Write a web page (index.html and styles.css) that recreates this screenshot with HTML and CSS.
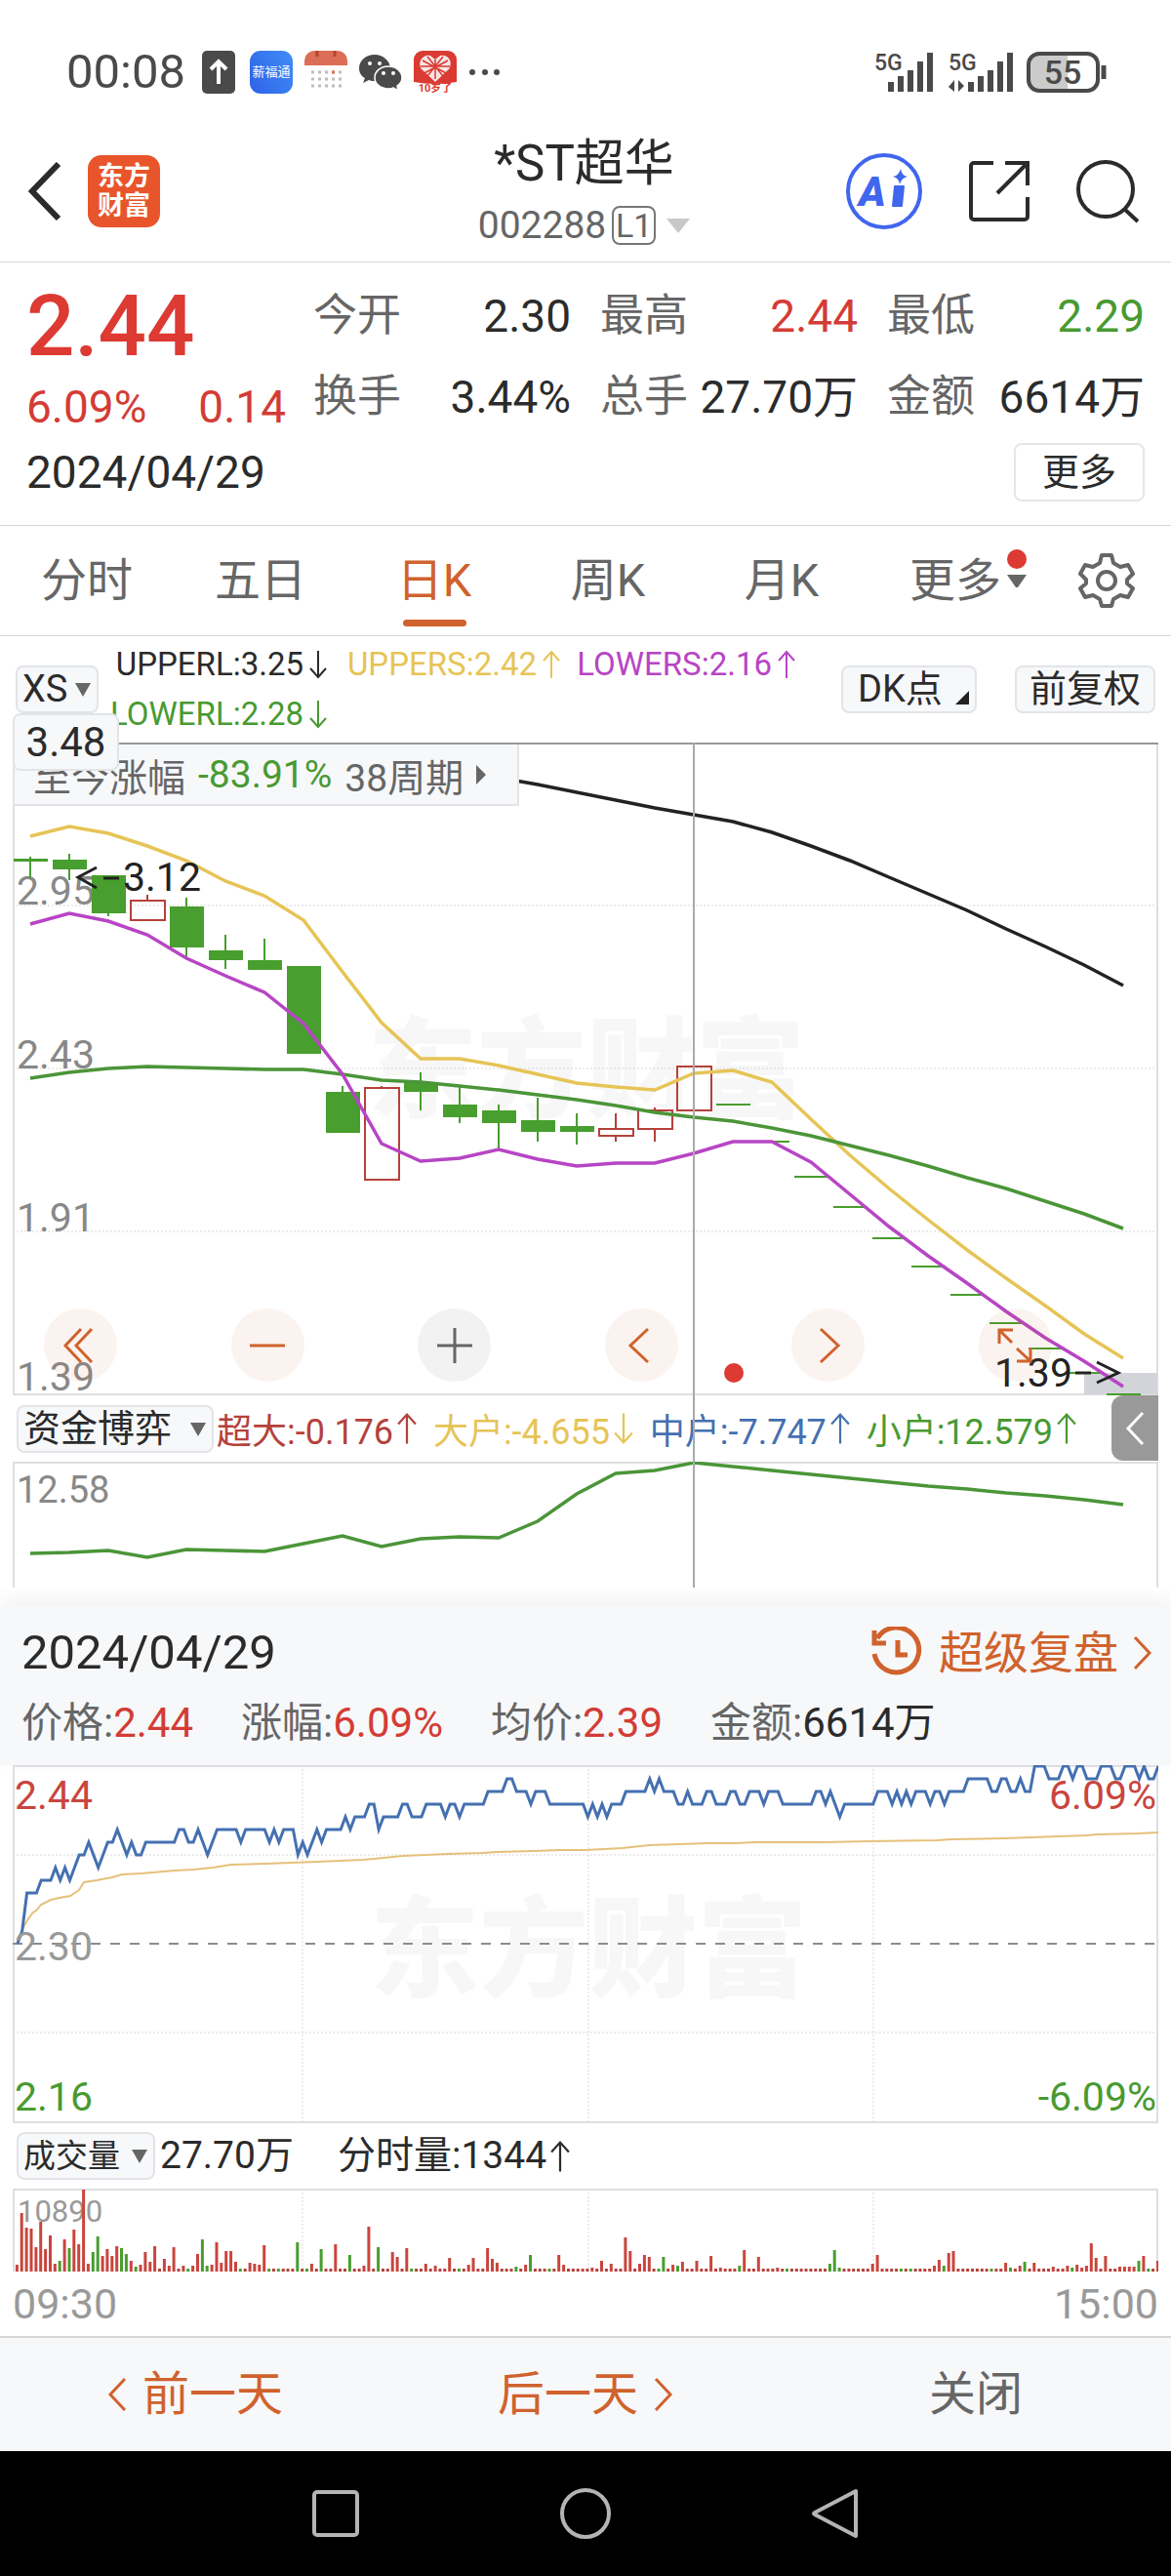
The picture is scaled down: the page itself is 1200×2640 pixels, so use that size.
FILE: index.html
```html
<!DOCTYPE html>
<html lang="zh-CN">
<head>
    <meta charset="UTF-8">
    <meta name="viewport" content="width=device-width, initial-scale=1.0">
    <title>*ST超华 002288</title>
    <link rel="stylesheet" href="styles.css">
</head>
<body>
    <!-- shared icons -->
    <svg class="defs" width="0" height="0" aria-hidden="true">
        <symbol id="up" viewBox="0 0 18 30"><path d="M9 29V2M1 11L9 2l8 9" fill="none" stroke="currentColor" stroke-width="2"/></symbol>
        <symbol id="down" viewBox="0 0 18 30"><path d="M9 1v27M1 19l8 9 8-9" fill="none" stroke="currentColor" stroke-width="2"/></symbol>
        <symbol id="left" viewBox="0 0 20 36"><path d="M18 2L3 18l15 16" fill="none" stroke="currentColor" stroke-width="3"/></symbol>
        <symbol id="right" viewBox="0 0 20 36"><path d="M2 2l15 16L2 34" fill="none" stroke="currentColor" stroke-width="3"/></symbol>
    </svg>

    <!-- Status bar -->
    <div class="status">
        <span class="clock">00:08</span>
        <svg width="34" height="44" viewBox="0 0 34 44"><rect width="34" height="44" rx="5" fill="#4a4a4a"/><path d="M17 34V11M9 19l8-8 8 8" fill="none" stroke="#fff" stroke-width="4"/></svg>
        <span class="app-blue">薪福通</span>
        <svg width="44" height="44" viewBox="0 0 44 44">
            <path d="M0 15V10A10 10 0 0 1 10 0H34A10 10 0 0 1 44 10V15Z" fill="#dc6e57"/>
            <path d="M13 0v6M31 0v6" stroke="#b5452f" stroke-width="3"/>
            <path d="M7 22h31M7 29h31M7 36h31" stroke="#bdbdbd" stroke-width="3" stroke-dasharray="3 4"/>
            <path d="M28 22h3" stroke="#dc6e57" stroke-width="3"/>
        </svg>
        <svg width="44" height="38" viewBox="0 0 44 38" fill="#4a4a4a">
            <path d="M16 1C7 1 0 7 0 15c0 4 2 8 6 10l-2 5 6-3c2 1 4 1 6 1 9 0 16-6 16-13S25 1 16 1z"/>
            <path d="M30 13c-8 0-14 5-14 11.500s6 11.500 14 11.500c2 0 4 0 5-1l5 3-1-5c3-2 5-5 5-8.500C44 18 38 13 30 13z" stroke="#fff" stroke-width="1.500"/>
            <g fill="#fff"><circle cx="11" cy="10" r="2"/><circle cx="21" cy="10" r="2"/><circle cx="25" cy="20" r="2"/><circle cx="35" cy="20" r="2"/></g>
        </svg>
        <svg width="44" height="44" viewBox="0 0 44 44">
            <rect width="44" height="44" rx="9" fill="#fff"/>
            <path d="M0 32V9A9 9 0 0 1 9 0H35A9 9 0 0 1 44 9V32Q22 36 0 32Z" fill="#d93a32"/>
            <path d="M22 32L8 19C3 11 10 3 17 5l5 4 5-4c8-2 14 6 9 14z" fill="#f7e3e1"/>
            <path d="M9 10l26 14M35 10L9 24M22 9v20M7 16h30M14 6l16 20M30 6L14 26" stroke="#d93a32" stroke-width="1.500"/>
            <text x="22" y="42" text-anchor="middle" class="tiny">10岁了</text>
        </svg>
        <svg width="34" height="8" viewBox="0 0 34 8" fill="#4a4a4a"><circle cx="4" cy="4" r="3"/><circle cx="17" cy="4" r="3"/><circle cx="29" cy="4" r="3"/></svg>
        <svg class="signal" width="64" height="44" viewBox="0 0 64 44"><text x="0" y="20" class="net">5G</text><path d="M17 42V32M27 42V26M37 42V20M47 42V11M57 42V2" stroke="#4a4a4a" stroke-width="6"/></svg>
        <svg width="68" height="44" viewBox="0 0 68 44"><text x="0" y="20" class="net">5G</text><path d="M23 42V32M33 42V26M43 42V20M53 42V11M63 42V2" stroke="#4a4a4a" stroke-width="6"/><path d="M6 42V30l-6 7zM10 30v12l6-6z" fill="#4a4a4a"/></svg>
        <svg class="battery" width="82" height="44" viewBox="0 0 82 44">
            <rect x="3" y="4" width="70" height="36" rx="10" fill="#fff"/>
            <path d="M42 4H13A10 10 0 0 0 3 14V30A10 10 0 0 0 13 40H42Z" fill="#cbcbcb"/>
            <rect x="2" y="3" width="71" height="38" rx="11" fill="none" stroke="#4a4a4a" stroke-width="4"/>
            <path d="M79 15v14" stroke="#4a4a4a" stroke-width="5"/>
            <text x="37" y="34" text-anchor="middle" class="level">55</text>
        </svg>
    </div>

    <!-- Title bar -->
    <header class="topbar">
        <div class="topbar-left">
            <button class="icon-btn" aria-label="返回"><svg width="34" height="60" viewBox="0 0 34 60"><path d="M31 2L4 30l27 28" fill="none" stroke="#2b2b2b" stroke-width="6"/></svg></button>
            <div class="logo">东方<br>财富</div>
        </div>
        <div class="title">
            <h1>*ST超华</h1>
            <div class="code">002288<span class="level1">L1</span><span class="tri tri-light"></span></div>
        </div>
        <div class="topbar-right">
            <button class="icon-btn" aria-label="AI">
                <svg width="80" height="80" viewBox="0 0 80 80"><circle cx="40" cy="40" r="37" fill="none" stroke="#4166ee" stroke-width="4"/><text x="14" y="55" class="ai">A</text><path d="M49 55l2-20h9l-2 20z" fill="#4166ee" stroke="#4166ee" stroke-width="2" stroke-linejoin="round"/><path d="M57 17q1 7 7 8-6 1-8 8-1-7-7-8 6-1 8-8z" fill="#4166ee"/></svg>
            </button>
            <button class="icon-btn" aria-label="分享">
                <svg width="64" height="64" viewBox="0 0 64 64" fill="none" stroke="#2b2b2b" stroke-width="4"><path d="M26 3H6a3 3 0 0 0-3 3V58a3 3 0 0 0 3 3H58a3 3 0 0 0 3-3V38M38 3H61V26M61 3L30 34"/></svg>
            </button>
            <button class="icon-btn" aria-label="搜索">
                <svg width="66" height="66" viewBox="0 0 66 66" fill="none" stroke="#2b2b2b" stroke-width="4"><circle cx="31" cy="31" r="28"/><path d="M50 51l14 13"/></svg>
            </button>
        </div>
    </header>

    <!-- Quote -->
    <section class="quote">
        <div class="quote-top">
            <div class="quote-main">
                <div class="price">2.44</div>
                <div class="change"><span>6.09%</span><span>0.14</span></div>
            </div>
            <dl class="stats">
                <div><dt>今开</dt><dd>2.30</dd></div>
                <div><dt>最高</dt><dd class="red">2.44</dd></div>
                <div><dt>最低</dt><dd class="green">2.29</dd></div>
                <div><dt>换手</dt><dd>3.44%</dd></div>
                <div><dt>总手</dt><dd>27.70万</dd></div>
                <div><dt>金额</dt><dd>6614万</dd></div>
            </dl>
        </div>
        <div class="quote-date">
            <span>2024/04/29</span>
            <button class="more">更多</button>
        </div>
    </section>

    <!-- Period tabs -->
    <nav class="tabs">
        <button>分时</button>
        <button>五日</button>
        <button class="active">日K</button>
        <button>周K</button>
        <button>月K</button>
        <button class="tab-more">更多<span class="tab-mark"><i class="dot"></i><i class="tri"></i></span></button>
        <button aria-label="设置">
            <svg width="58" height="58" viewBox="0 0 58 58" fill="none" stroke="#666" stroke-width="4"><path d="M24 3h10l2 8 7 4 8-2 5 9-6 6v4l6 5-5 9-8-2-7 4-2 7H24l-2-7-7-4-8 2-5-9 6-5v-4l-6-6 5-9 8 2 7-4z" stroke-linejoin="round"/><circle cx="29" cy="29" r="9"/></svg>
        </button>
    </nav>

    <!-- Main indicator -->
    <div class="indicator">
        <span class="pick pick-xs"><select aria-label="主图指标"><option>XS</option></select></span>
        <div class="legend">
            <span>UPPERL:3.25<svg class="arrow"><use href="#down"/></svg></span>
            <span class="yellow">UPPERS:2.42<svg class="arrow"><use href="#up"/></svg></span>
            <span class="purple">LOWERS:2.16<svg class="arrow"><use href="#up"/></svg></span>
            <span class="green">LOWERL:2.28<svg class="arrow"><use href="#down"/></svg></span>
        </div>
        <div class="indicator-btns">
            <button class="chip dk">DK点<svg width="14" height="14" viewBox="0 0 14 14"><path d="M14 0v14H0z" fill="#222"/></svg></button>
            <button class="chip">前复权</button>
        </div>
    </div>

    <div class="kline">
        <div class="chart">
            <svg id="kchart" class="plot" viewBox="0 0 1174 669">
                <text class="mark" x="588" y="376">东方财富</text>
                <path class="grid" d="M0 167H1174M0 334H1174M0 501H1174"/>
                <path class="frame" d="M1 0V668H1173V0"/>
                <path d="M0 1H1174" stroke="#999" stroke-width="2"/>
                <rect x="1098" y="646" width="75" height="22" fill="#d3d4da"/>
                <g class="axis"><text x="4" y="166">2.95</text><text x="4" y="334">2.43</text><text x="4" y="501">1.91</text><text x="4" y="664">1.39</text></g>
                <g id="candles"></g>
                <g id="lines"></g>
                <g class="extreme">
                    <path d="M86 128L67 138l19 11M93 139h16M1089 646h16M1111 635l22 11-22 10"/>
                    <text x="113" y="152">3.12</text><text x="1006" y="660">1.39</text>
                </g>
                <circle cx="739" cy="646" r="10" fill="#dc3a32"/>
            </svg>
            <button class="since">至今涨幅 <span class="green">-83.91%</span> 38周期<i class="tri-right"></i></button>
            <span class="tag">3.48</span>
            <div class="controls">
                <button aria-label="最左"><svg width="40" height="40" viewBox="0 0 40 40"><path d="M20 3L4 20l16 17M31 3L15 20l16 17"/></svg></button>
                <button aria-label="缩小"><svg width="40" height="40" viewBox="0 0 40 40"><path d="M2 20h36"/></svg></button>
                <button class="off" aria-label="放大"><svg width="40" height="40" viewBox="0 0 40 40"><path d="M2 20h36M20 2v36"/></svg></button>
                <button aria-label="左移"><svg width="40" height="40" viewBox="0 0 40 40"><path d="M27 3L9 20l18 17"/></svg></button>
                <button aria-label="右移"><svg width="40" height="40" viewBox="0 0 40 40"><path d="M12 3l18 17-18 17"/></svg></button>
                <button aria-label="全屏"><svg width="40" height="40" viewBox="0 0 40 40"><path d="M4 18V4h14M4 4l13 13M22 36h14V22M36 36L22 23"/></svg></button>
            </div>
        </div>

        <div class="sub">
            <span class="pick pick-fund"><select aria-label="副图指标"><option>资金博弈</option></select></span>
            <div class="sub-legend">
                <span class="crimson">超大:-0.176<svg class="arrow"><use href="#up"/></svg></span>
                <span class="yellow">大户:-4.655<svg class="arrow"><use href="#down"/></svg></span>
                <span class="blue">中户:-7.747<svg class="arrow"><use href="#up"/></svg></span>
                <span class="green">小户:12.579<svg class="arrow"><use href="#up"/></svg></span>
            </div>
            <button class="fold" aria-label="展开"><svg width="20" height="36"><use href="#left"/></svg></button>
        </div>

        <svg class="plot" viewBox="0 0 1174 129">
            <path class="frame" d="M1 129V1H1173V129"/>
            <text class="axis-sm" x="4" y="42">12.58</text>
            <g id="fund"></g>
        </svg>
        <div class="crosshair"></div>
    </div>

    <!-- Day detail -->
    <section class="day">
        <div class="day-head">
            <div class="day-row">
                <span class="day-date">2024/04/29</span>
                <a class="replay" href="#">
                    <svg width="56" height="54" viewBox="0 0 56 54" fill="none" stroke="#d0622d" stroke-width="5"><path d="M8 12A23 23 0 1 1 5 28M5 4v13h12M29 14v15h10"/></svg>
                    超级复盘
                    <svg width="20" height="36"><use href="#right"/></svg>
                </a>
            </div>
            <div class="day-stats">
                <span>价格:<b class="red">2.44</b></span>
                <span>涨幅:<b class="red">6.09%</b></span>
                <span>均价:<b class="red">2.39</b></span>
                <span>金额:<b>6614万</b></span>
            </div>
        </div>
        <svg class="plot" viewBox="0 0 1174 367">
            <text class="mark" x="590" y="229">东方财富</text>
            <path class="grid" d="M0 92H1174M0 274H1174M297 0V366M590 0V366M882 0V366"/>
            <path class="frame" d="M1 366V1H1173V366Z"/>
            <path d="M0 183H1174" stroke="#8c8c8c" stroke-width="2" stroke-dasharray="10 10"/>
            <g id="intraday"></g>
            <g class="day-axis">
                <text x="2" y="45" class="f-red">2.44</text><text x="2" y="200" class="f-gray">2.30</text><text x="2" y="354" class="f-green">2.16</text>
                <text x="1172" y="45" text-anchor="end" class="f-red">6.09%</text><text x="1172" y="354" text-anchor="end" class="f-green">-6.09%</text>
            </g>
        </svg>
        <div class="volume">
            <span class="pick pick-vol"><select aria-label="成交指标"><option>成交量</option></select></span>
            <span>27.70万</span>
            <span class="minute">分时量:1344<svg class="arrow"><use href="#up"/></svg></span>
        </div>
        <svg class="plot" viewBox="0 0 1174 86">
            <path class="grid" d="M297 0V85M590 0V85M882 0V85"/>
            <path class="frame" d="M1 85V1H1173V85"/>
            <text class="axis-vol" x="5" y="34">10890</text>
            <g id="volume"></g>
        </svg>
        <div class="times"><span>09:30</span><span>15:00</span></div>
    </section>

    <footer class="pager">
        <button><svg width="20" height="36"><use href="#left"/></svg>前一天</button>
        <button>后一天<svg width="20" height="36"><use href="#right"/></svg></button>
        <button class="close">关闭</button>
    </footer>

    <div class="navbar">
        <button aria-label="最近任务"><svg width="54" height="54" viewBox="0 0 54 54"><rect x="5" y="5" width="44" height="44" rx="3"/></svg></button>
        <button aria-label="主页"><svg width="54" height="54" viewBox="0 0 54 54"><circle cx="27" cy="27" r="24"/></svg></button>
        <button aria-label="返回"><svg width="54" height="54" viewBox="0 0 54 54"><path d="M48 4V50L6 28q-2-1 0-2z" stroke-linejoin="round"/></svg></button>
    </div>

    <script src="chart.js"></script>
</body>
</html>
```

FILE: styles.css
```css
* {
    box-sizing: border-box;
}
body {
    margin: 0;
    font-family: Roboto, "Noto Sans CJK SC", sans-serif;
    color: #2b2b2b;
    background: #fff;
}
button, select {
    margin: 0;
    padding: 0;
    border: 0;
    background: none;
    font: inherit;
    color: inherit;
}
svg {
    display: block;
    flex: none;
}
.defs {
    position: absolute;
}
.red { color: #d33c35; }
.crimson { color: #b5413b; }
.green { color: #489a31; }
.yellow { color: #e6c456; }
.purple { color: #b745c4; }
.blue { color: #4470b0; }

/* status bar */
.status {
    display: flex;
    align-items: center;
    gap: 12px;
    padding: 44px 66px 0 68px;
    line-height: 60px;
}
.clock {
    margin-right: 5px;
    font-size: 49px;
    color: #4a4a4a;
}
.app-blue {
    width: 44px;
    height: 44px;
    margin-left: 3px;
    border-radius: 11px;
    background: linear-gradient(60deg, #2f62e8, #3f8df5);
    color: #fff;
    font-size: 13px;
    line-height: 44px;
    text-align: center;
    white-space: nowrap;
}
.tiny {
    font-size: 11px;
    font-weight: 700;
    fill: #d93a32;
}
.signal {
    margin-left: auto;
}
.net {
    font-size: 23px;
    font-weight: 500;
    fill: #4a4a4a;
}
.level {
    font-size: 34px;
    font-weight: 500;
    fill: #4a4a4a;
}

/* title bar */
.topbar {
    display: grid;
    grid-template-columns: 1fr auto 1fr;
    align-items: center;
    padding: 34px 32px 15px 29px;
    border-bottom: 1px solid #d6d6d6;
}
.topbar-left, .topbar-right {
    display: flex;
    align-items: center;
}
.topbar-left {
    gap: 27px;
}
.topbar-right {
    justify-content: flex-end;
    gap: 46px;
}
.logo {
    width: 74px;
    height: 74px;
    padding-top: 7px;
    border-radius: 14px;
    background: #e8552b;
    color: #fff;
    font-size: 27px;
    font-weight: 700;
    line-height: 30px;
    text-align: center;
}
.title {
    text-align: center;
}
.title h1 {
    margin: 0 0 11px;
    font-size: 51px;
    font-weight: 400;
    line-height: 60px;
}
.code {
    display: flex;
    align-items: center;
    justify-content: center;
    font-size: 39px;
    line-height: 44px;
    color: #666;
}
.level1 {
    width: 45px;
    margin: 0 11px 0 6px;
    border: 2px solid #777;
    border-radius: 8px;
    font-size: 34px;
    line-height: 36px;
}
.tri {
    border: 9px solid transparent;
    border-top: 13px solid #666;
    border-bottom: 0;
}
.tri-light {
    border-width: 15px 12px 0;
    border-top-color: #c8c8c8;
}
.ai {
    font-size: 42px;
    font-weight: 900;
    font-style: italic;
    fill: #4166ee;
}

/* quote */
.quote {
    padding: 15px 27px 24px;
    border-bottom: 1px solid #d6d6d6;
    font-size: 46px;
}
.quote-top {
    display: grid;
    grid-template-columns: 266px 1fr;
    gap: 28px;
}
.price {
    font-size: 87px;
    font-weight: 500;
    line-height: 100px;
    color: #dc3a32;
}
.change {
    display: flex;
    justify-content: space-between;
    line-height: 66px;
    color: #d33c35;
}
.stats {
    display: grid;
    grid-template-columns: repeat(3, 1fr);
    column-gap: 30px;
    margin: 0;
    line-height: 80px;
}
.stats div {
    display: flex;
    justify-content: space-between;
    white-space: nowrap;
}
.stats dt {
    font-size: 45px;
    color: #666;
}
.stats dd {
    margin: 0;
}
.quote-date {
    display: flex;
    justify-content: space-between;
    align-items: center;
    margin-top: 4px;
}
.more {
    width: 134px;
    border: 2px solid #e6e6e6;
    border-radius: 8px;
    font-size: 38px;
    line-height: 56px;
}

/* tabs */
.tabs {
    display: grid;
    grid-template-columns: repeat(6, 178fr) 132fr;
    border-bottom: 1px solid #d6d6d6;
    font-size: 47px;
    line-height: 112px;
    color: #666;
}
.tabs button {
    display: flex;
    justify-content: center;
    align-items: center;
    position: relative;
}
.tabs .active {
    color: #d0622d;
}
.active::after {
    content: "";
    position: absolute;
    bottom: 9px;
    width: 65px;
    height: 7px;
    border-radius: 4px;
    background: #d0622d;
}
.tab-mark {
    position: absolute;
    left: 142px;
    top: 24px;
}
.tab-mark i {
    display: block;
}
.dot {
    width: 20px;
    height: 20px;
    margin-bottom: 6px;
    border-radius: 50%;
    background: #dc3a32;
}

/* indicator row */
.indicator {
    display: flex;
    align-items: center;
    padding: 3px 16px 4px;
}
.pick {
    display: flex;
    flex: none;
    position: relative;
}
.pick::after {
    content: "";
    position: absolute;
    right: 8px;
    top: 18px;
    border: 8px solid transparent;
    border-top: 14px solid #666;
    border-bottom: 0;
    pointer-events: none;
}
.pick select, .chip {
    height: 49px;
    border: 2px solid #e2e4e8;
    border-radius: 8px;
    background: #f7f8fa;
    font-size: 38px;
    line-height: 45px;
    appearance: none;
}
.pick select {
    width: 100%;
    padding-left: 5px;
}
.pick-xs {
    width: 85px;
}
.pick-fund {
    width: 202px;
}
.pick-vol {
    width: 142px;
}
.pick-vol select {
    font-size: 33px;
}
.legend {
    display: grid;
    grid-template-columns: 215px 219px 221px;
    column-gap: 20px;
    justify-items: end;
    margin-left: 19px;
    font-size: 33px;
    line-height: 51px;
}
.legend span, .sub-legend span, .minute {
    display: flex;
    align-items: center;
    white-space: nowrap;
}
.arrow {
    width: 18px;
    height: 30px;
    margin-left: 6px;
}
.indicator-btns {
    display: flex;
    gap: 39px;
    margin-left: auto;
}
.chip {
    width: 144px;
}
.dk {
    display: flex;
    align-items: center;
    justify-content: space-between;
    width: 139px;
    padding: 0 6px 0 15px;
}
.dk svg {
    align-self: flex-end;
    margin-bottom: 7px;
}

/* k-line */
.kline {
    position: relative;
    margin: 0 13px 19px;
}
.chart {
    position: relative;
}
.plot {
    width: 100%;
    height: auto;
}
.frame {
    fill: none;
    stroke: #dfdfe1;
    stroke-width: 2;
}
.grid {
    fill: none;
    stroke: #d8d8d8;
    stroke-width: 1;
    stroke-dasharray: 2 2;
}
.mark {
    font-size: 112px;
    font-weight: 900;
    text-anchor: middle;
    fill: #f7f7f7;
}
.axis, .day-axis, .extreme {
    font-size: 41px;
}
.axis {
    fill: #888;
}
.axis-sm {
    font-size: 38px;
    fill: #888;
}
.axis-vol {
    font-size: 31px;
    fill: #999;
}
.extreme {
    fill: #222;
}
.extreme path {
    fill: none;
    stroke: #222;
    stroke-width: 3;
}
.f-red { fill: #c9453e; }
.f-green { fill: #489a31; }
.f-gray { fill: #999; }
.since {
    display: flex;
    align-items: center;
    gap: 13px;
    position: absolute;
    left: 0;
    top: 2px;
    width: 519px;
    height: 63px;
    padding-left: 19px;
    border: 2px solid #e2e4e8;
    border-top: 0;
    background: #f7f8fa;
    font-size: 39px;
    color: #666;
    white-space: nowrap;
}
.tri-right {
    border: 10px solid transparent;
    border-left-color: #666;
    border-right: 0;
}
.tag {
    position: absolute;
    left: 0;
    top: -30px;
    width: 109px;
    border: 2px solid #e2e4e8;
    border-radius: 8px;
    background: #f7f8fa;
    font-size: 42px;
    line-height: 55px;
    text-align: center;
}
.controls {
    display: flex;
    justify-content: space-between;
    position: absolute;
    left: 32px;
    right: 109px;
    bottom: 14px;
}
.controls button {
    display: flex;
    align-items: center;
    justify-content: center;
    width: 75px;
    height: 75px;
    border-radius: 50%;
    background: rgba(208, 98, 45, 0.08);
}
.controls .off {
    background: rgba(0, 0, 0, 0.05);
}
.controls path {
    fill: none;
    stroke: #d0622d;
    stroke-width: 3;
}
.controls .off path {
    stroke: #666;
}
.crosshair {
    position: absolute;
    left: 59.4%;
    top: 0;
    bottom: 0;
    width: 2px;
    background: #aaa;
}
.sub {
    display: flex;
    align-items: center;
    padding-left: 4px;
}
.sub-legend {
    display: flex;
    justify-content: space-between;
    flex: 1;
    margin: 0 36px 0 3px;
    font-size: 36px;
}
.sub-legend .arrow, .minute .arrow {
    width: 20px;
    height: 36px;
    margin-left: 4px;
}
.fold {
    display: flex;
    align-items: center;
    justify-content: center;
    width: 48px;
    height: 67px;
    margin-bottom: 1px;
    border-radius: 12px 0 0 12px;
    background: #999;
    color: #fff;
}

/* day detail */
.day {
    border-bottom: 2px solid #d6d6d6;
}
.day .plot {
    width: auto;
    margin: 0 13px;
}
.day-head {
    padding: 18px 19px 10px 22px;
    background: #f7f8fa;
    box-shadow: 0 -6px 20px rgba(0, 0, 0, 0.06);
}
.day-row {
    display: flex;
    justify-content: space-between;
    align-items: center;
    line-height: 60px;
}
.day-date {
    font-size: 49px;
}
.replay {
    display: flex;
    align-items: center;
    gap: 15px;
    font-size: 46px;
    color: #d0622d;
    text-decoration: none;
}
.day-stats {
    display: flex;
    gap: 49px;
    margin-top: 9px;
    font-size: 42px;
    line-height: 66px;
    color: #666;
}
.day-stats b {
    font-weight: 400;
}
.day-stats b:not(.red) {
    color: #2b2b2b;
}
.volume {
    display: flex;
    align-items: center;
    padding: 0 17px;
    gap: 5px;
    font-size: 39px;
    line-height: 67px;
}
.minute {
    margin-left: 40px;
}
.times {
    display: flex;
    justify-content: space-between;
    padding: 0 13px;
    font-size: 43px;
    line-height: 65px;
    color: #999;
}

/* bottom */
.pager {
    display: grid;
    grid-template-columns: repeat(3, 1fr);
    background: #f7f8fa;
    font-size: 48px;
    line-height: 116px;
    color: #d0622d;
}
.pager button {
    display: flex;
    align-items: center;
    justify-content: center;
    gap: 16px;
}
.pager .close {
    color: #666;
}
.navbar {
    display: grid;
    grid-template-columns: repeat(3, 256px);
    justify-content: center;
    padding: 37px 0;
    background: #000;
}
.navbar button {
    display: flex;
    justify-content: center;
}
.navbar svg {
    fill: none;
    stroke: #b4b4b4;
    stroke-width: 4;
}
```

FILE: chart.js
```js
const STEP = 40;
const FIRST = 18;
const GREEN = '#489e2e';
const RED = '#b5413b';

// [up, bodyTop, bodyBottom, high, low]
const candles = [
    [0, 119, 122, 117, 139], [0, 120, 130, 114, 141], [0, 136, 175, 136, 178], [1, 162, 182, 156, 182],
    [0, 168, 210, 159, 221], [0, 213, 223, 197, 232], [0, 223, 233, 201, 233], [0, 229, 319, 229, 319],
    [0, 358, 400, 352, 400], [1, 354, 448, 352, 448], [0, 348, 358, 338, 377], [0, 371, 384, 353, 390],
    [0, 377, 390, 371, 416], [0, 387, 399, 364, 409], [0, 393, 399, 380, 412], [1, 396, 403, 380, 409],
    [1, 377, 396, 374, 409], [1, 332, 377, 332, 381], [0, 370, 372, 370, 372], [0, 408, 410, 408, 410],
    [0, 444, 446, 444, 446], [0, 475, 477, 475, 477], [0, 507, 509, 507, 509], [0, 536, 538, 536, 538],
    [0, 565, 567, 565, 567], [0, 594, 596, 594, 596], [0, 620, 622, 620, 622], [0, 645, 647, 645, 647],
    [0, 667, 669, 667, 669]
];

const upperS = [96, 86, 93, 106, 121, 142, 157, 182, 235, 287, 324, 324, 331, 340, 349, 353, 356, 339, 336, 348, 386, 423, 457, 489, 520, 549, 577, 606, 631];
const lowerS = [186, 175, 183, 197, 221, 239, 256, 288, 340, 411, 429, 426, 417, 427, 434, 431, 431, 421, 409, 409, 430, 463, 496, 526, 554, 583, 610, 634, 660];
const lowerL = [344, 338, 334, 332, 333, 334, 335, 335, 340, 346, 348, 352, 356, 361, 366, 372, 379, 384, 388, 395, 403, 413, 423, 434, 446, 457, 470, 483, 498];
const upperL = [36, 43, 51, 59, 67, 74, 81, 92, 106, 121, 138, 155, 172, 191, 209, 228, 249];
const fund = [94, 93, 91, 98, 90, 91, 92, 84, 76, 87, 79, 77, 78, 61, 33, 12, 9, 1, 5, 9, 13, 17, 21, 25, 28, 32, 35, 39, 44];

// minute:cents over 2.00
const price = '1:30 2:31 3:34 5:34 6:35 8:35 9:36 10:35 11:36 12:35 14:37 15:37 16:38 18:36 20:38 21:38 22:39 24:37 25:38 26:37 27:37 28:38 34:38 35:39 36:39 37:38 38:38 39:39 41:37 43:39 47:39 48:38 49:39 53:39 54:38 55:39 56:38 57:39 59:39 60:37 61:38 62:37 64:39 65:38 66:39 69:39 70:40 71:39 72:40 74:40 75:41 76:41 77:39 78:40 81:40 82:41 83:41 84:40 86:40 87:41 90:41 91:40 92:41 93:41 94:40 95:41 99:41 100:42 103:42 104:43 105:43 106:42 108:42 109:41 110:42 112:42 113:41 120:41 121:40 122:41 123:40 124:41 125:40 126:41 128:41 129:42 133:42 134:43 135:42 136:43 137:42 139:42 140:41 141:41 142:42 143:41 145:41 146:42 147:42 148:41 150:41 151:42 152:42 153:41 154:41 155:42 157:42 158:41 159:42 161:42 162:41 168:41 169:42 170:42 171:41 172:42 174:40 175:41 181:41 182:42 184:42 185:41 186:42 187:41 188:42 189:41 190:42 192:42 193:41 194:42 195:42 196:41 197:42 200:42 201:43 205:43 206:42 207:42 208:43 209:43 210:42 211:42 212:43 213:42 214:42 215:44 217:44 218:43 220:43 221:44 222:44 223:43 224:44 225:44 226:43 228:43 229:44 231:44 232:43 233:43 234:44 236:44 237:43 238:44 239:43 240:43 241:44';
const average = '5,183 10,168 15,159 20,152 25,148 29,143 39,138 48,136 59,134 68,128 73,120 86,118 102,115 112,112 132,111 166,108 185,107 205,105 224,102 259,101 285,100 312,99 358,97 370,96 400,93 446,91 481,90 496,89 534,88 561,87 587,87 625,85 652,82 713,80 740,80 763,79 832,79 878,78 947,77 962,76 1016,75 1100,72 1111,71 1153,70 1174,69';

// minute:height, "g" marks a falling minute, the rest are near zero
const volume = '1:7 2:60 3:45 4:44 5:25 6:51 7:23 8:37 9:8 10:11g 11:33 12:24g 13:43 14:28 15:84 16:8 17:20g 18:36g 19:16 20:23 21:16 22:26 23:24g 24:18g 25:11 26:5g 27:7 28:20 29:10 30:26 32:13 33:6 34:25 36:6 37:3g 38:6 39:18 40:33g 41:6g 42:7 43:30 44:9 45:21 46:21 47:10 48:3g 50:9 51:8 52:7 53:27 54:3g 56:3g 60:30g 62:3g 63:8 65:23g 68:28 71:17g 74:6 75:46 77:25g 80:20 81:15 83:24 84:3g 87:8 89:6 92:14 94:3g 96:7 97:14 100:24 101:13 102:9 106:5g 108:7 109:17g 113:3g 115:17 116:7 122:4 124:11 126:8 129:35 130:21 132:8 133:17 134:15 136:3g 137:15g 139:7 140:6g 141:10 144:11 147:16 149:4 153:6g 154:22 157:15 161:4 163:3g 172:8g 173:22g 174:4g 181:8 182:17 187:3g 189:3g 194:6 195:12 196:6g 197:19 198:21 206:3g 209:9 210:4g 212:6 213:10g 215:9 219:5 222:6 223:4g 224:7 225:4 226:6 227:29 228:14 230:16 233:5 234:5 235:5 236:5 237:11g 238:16 239:3g 241:11';

function line(points, color, width = 3) {
    return `<polyline points="${points}" fill="none" stroke="${color}" stroke-width="${width}"/>`;
}

function series(values, start = 0) {
    return values.map((y, i) => `${FIRST + (i + start) * STEP},${y}`).join(' ');
}

document.getElementById('candles').innerHTML = candles.map(([up, top, bottom, high, low], i) => {
    const x = FIRST + i * STEP;
    const color = up ? RED : GREEN;
    const wick = `<path d="M${x} ${high}V${top}M${x} ${bottom}V${low}" stroke="${color}" stroke-width="2"/>`;
    const body = up
        ? `<rect x="${x - 17}" y="${top}" width="35" height="${bottom - top}" fill="none" stroke="${color}" stroke-width="2"/>`
        : `<rect x="${x - 17}" y="${top}" width="35" height="${bottom - top}" fill="${color}"/>`;
    return wick + body;
}).join('');

document.getElementById('lines').innerHTML =
    line(series(upperL, 12), '#222', 3.5) +
    line(series(upperS), '#e6c456', 3.5) +
    line(series(lowerL), '#4b9538', 3.5) +
    line(series(lowerS), '#b745c4', 3.5);

document.getElementById('fund').innerHTML = line(series(fund), '#4b9538', 3.5);

const pricePoints = price.split(' ').map(p => {
    const [m, c] = p.split(':').map(Number);
    return `${(m * 1174 / 241).toFixed(1)},${1 + (44 - c) * 13}`;
}).join(' ');
document.getElementById('intraday').innerHTML = line(average, '#e6c07a', 2) + line(pricePoints, '#4470b0');

const bars = Array.from({ length: 241 }, () => [3, RED]);
volume.split(' ').forEach(v => {
    const [m, h] = v.split(':');
    bars[m - 1] = [parseInt(h), h.endsWith('g') ? GREEN : '#c9453e'];
});
document.getElementById('volume').innerHTML = bars.map(([h, color], i) =>
    `<rect x="${((i + 1) * 1174 / 241 - 2).toFixed(1)}" y="${85 - h}" width="3" height="${h}" fill="${color}"/>`
).join('');
```
